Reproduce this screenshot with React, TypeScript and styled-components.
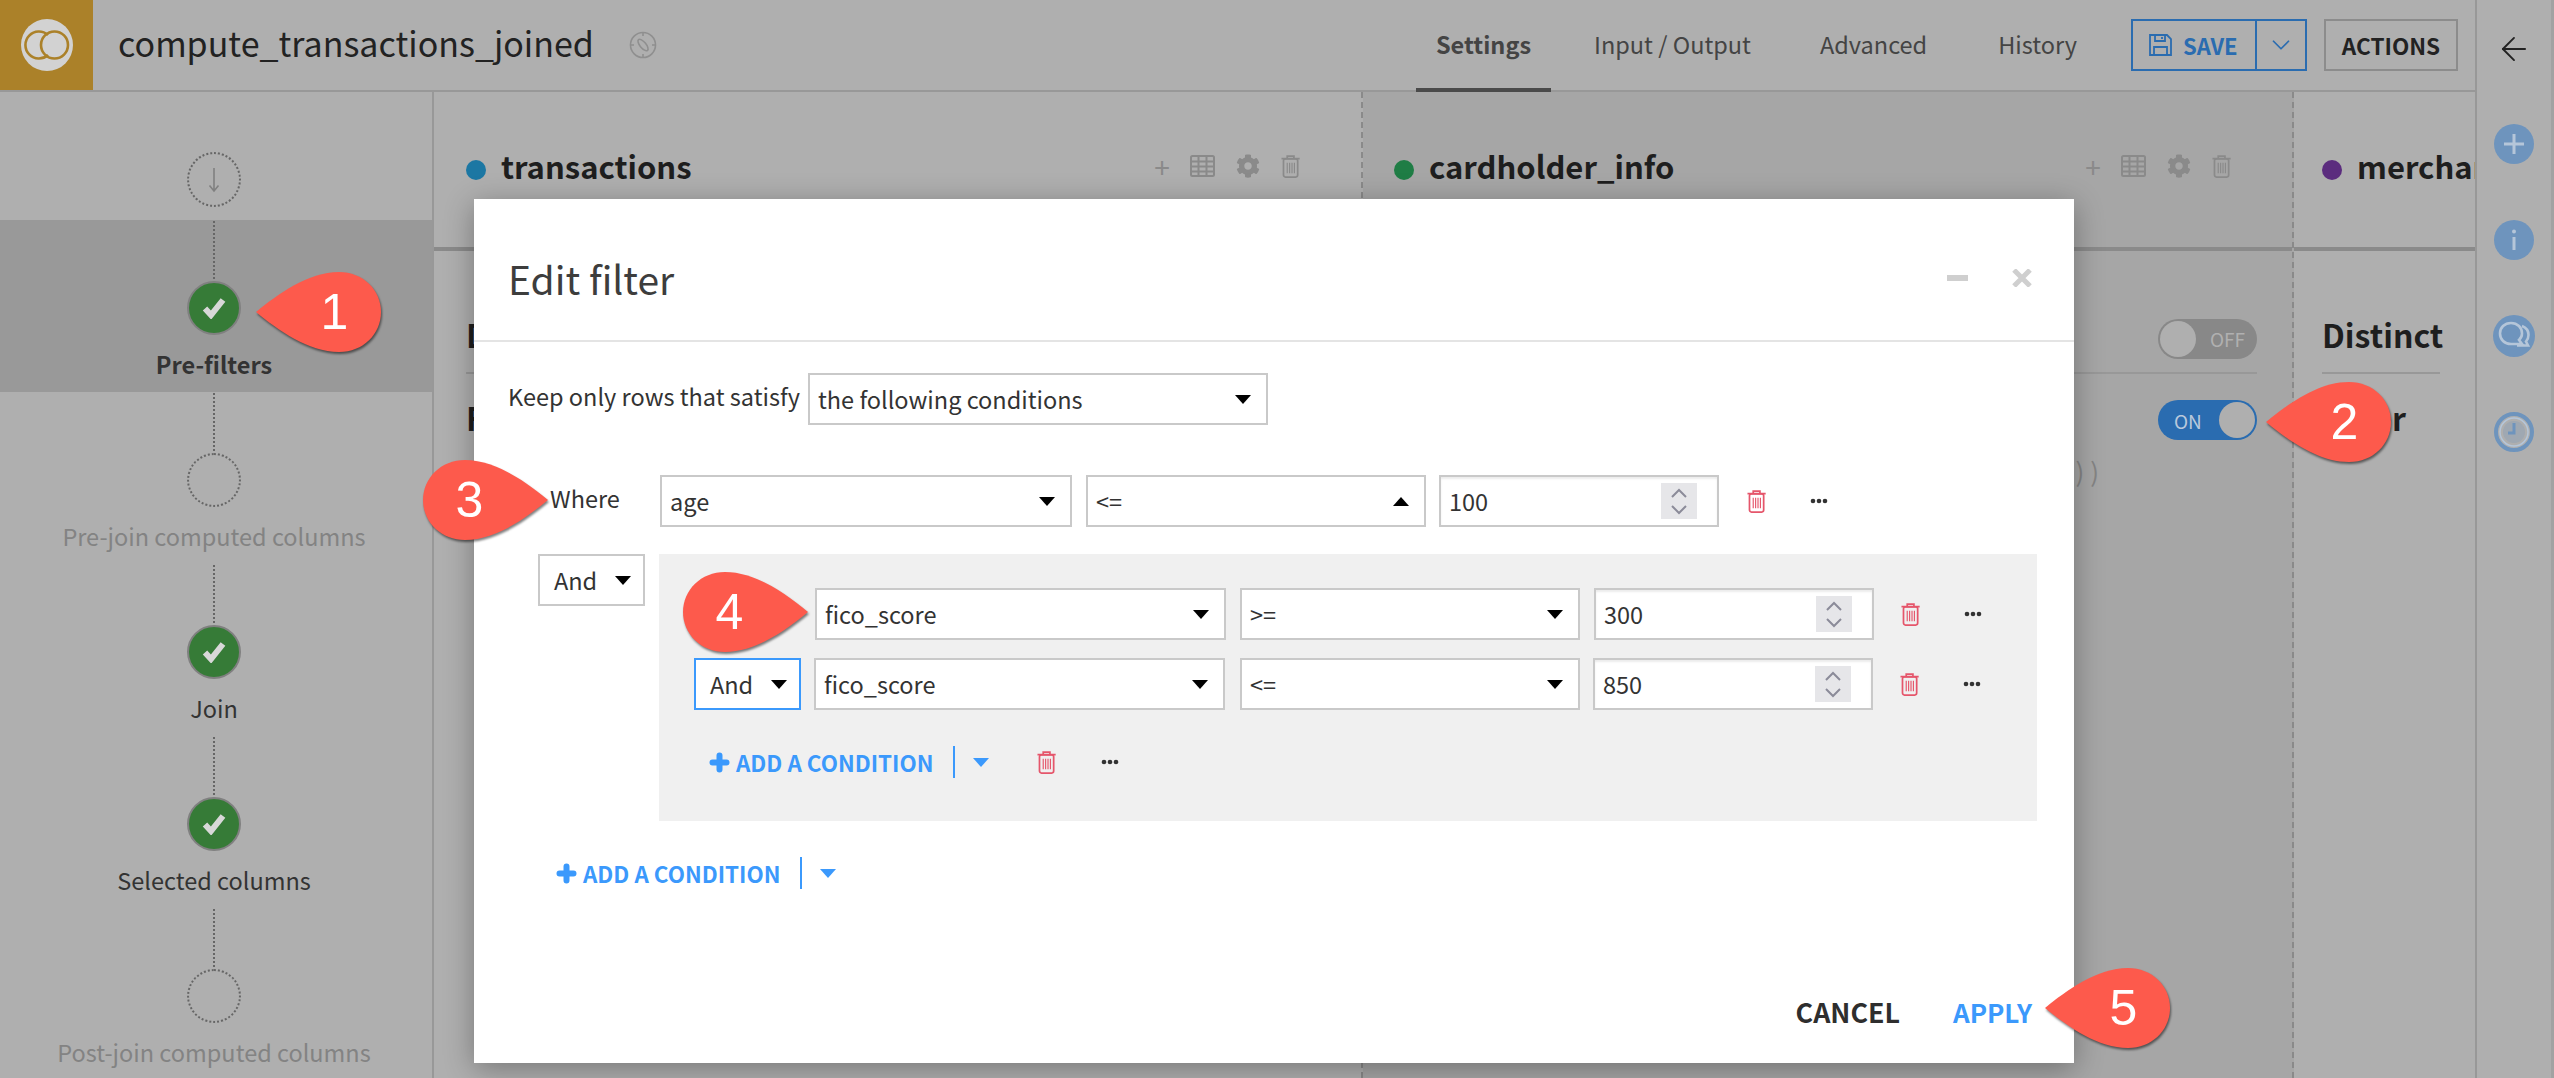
import styled, { createGlobalStyle } from "styled-components";
import { ArrowLeft, ChevronDown } from "lucide-react";
import { FaCog } from "react-icons/fa";

const GlobalStyle = createGlobalStyle`
  html, body {
    margin: 0;
    padding: 0;
    width: 2554px;
    height: 1078px;
    overflow: hidden;
    background: #afafaf;
  }
  * { box-sizing: border-box; }
  body {
    font-family: "Noto Sans CJK SC", "Source Sans Pro", "Liberation Sans", sans-serif;
    font-size: 23.5px;
    color: #333;
  }
`;

const Page = styled.div`
  position: relative;
  display: flex;
  width: 2554px;
  height: 1078px;
  overflow: hidden;
`;

const Workspace = styled.div`
  display: flex;
  flex-direction: column;
  width: 2475px;
`;

const Header = styled.header`
  display: flex;
  align-items: center;
  flex: none;
  height: 92px;
  padding-right: 17px;
  border-bottom: 2px solid #989898;
`;

const LogoBlock = styled.div`
  display: flex;
  align-items: center;
  justify-content: center;
  width: 93px;
  height: 90px;
  background: #ab8129;
`;

const Title = styled.h1`
  margin: 0 35px 4px 25px;
  font-size: 34px;
  font-weight: 400;
  line-height: 44px;
  color: #222;
`;

const Tabs = styled.nav`
  display: flex;
  align-self: stretch;
  margin-left: auto;
  margin-right: 34px;
`;

const Tab = styled.div<{ $active?: boolean; $gap?: number }>`
  display: flex;
  align-items: center;
  height: 92px;
  margin-left: ${(p) => p.$gap ?? 0}px;
  padding: 0 20px;
  font-weight: ${(p) => (p.$active ? 700 : 400)};
  color: #444;
  border-bottom: 4px solid ${(p) => (p.$active ? "#4a4a4a" : "transparent")};
`;

const SaveGroup = styled.div`
  display: flex;
  width: 176px;
  height: 52px;
  border: 2px solid #2a6cb0;
  color: #2a6cb0;
`;

const SaveButton = styled.div`
  display: flex;
  align-items: center;
  gap: 11px;
  width: 124px;
  padding-left: 16px;
  font-size: 22px;
  font-weight: 700;
  border-right: 2px solid #2a6cb0;
`;

const SaveCaret = styled.div`
  display: flex;
  flex: 1;
  align-items: center;
  justify-content: center;
`;

const ActionsButton = styled.div`
  display: flex;
  align-items: center;
  justify-content: center;
  width: 134px;
  height: 52px;
  margin-left: 17px;
  border: 2px solid #8c8c8c;
  font-size: 22.5px;
  font-weight: 700;
  color: #222;
`;

const Body = styled.div`
  display: flex;
  flex: 1;
  min-height: 0;
`;

const Sidebar = styled.aside`
  flex: none;
  width: 434px;
  padding-top: 60px;
  border-right: 2px solid #989898;
`;

const StartCircle = styled.div`
  display: flex;
  align-items: center;
  justify-content: center;
  width: 54px;
  height: 55px;
  margin: 0 auto 13px 187px;
  border: 2px dotted #666;
  border-radius: 50%;
  color: #808080;
`;

const Step = styled.div<{ $active?: boolean }>`
  display: flex;
  flex-direction: column;
  align-items: center;
  height: 172px;
  padding: 1px 4px 0 0;
  background: ${(p) => (p.$active ? "#999" : "transparent")};
`;

const StepLine = styled.div`
  width: 0;
  height: 58px;
  margin-bottom: 2px;
  border-left: 2px dotted #666;
`;

const StepCircle = styled.div<{ $done?: boolean }>`
  display: flex;
  flex: none;
  align-items: center;
  justify-content: center;
  width: 54px;
  height: 54px;
  border-radius: 50%;
  border: 2px ${(p) => (p.$done ? "solid #808080" : "dotted #666")};
  background: ${(p) => (p.$done ? "#367b37" : "transparent")};
`;

const StepLabel = styled.div<{ $tone?: "active" | "muted" }>`
  margin-top: 12px;
  line-height: 34px;
  white-space: nowrap;
  font-weight: ${(p) => (p.$tone === "active" ? 700 : 400)};
  color: ${(p) => (p.$tone === "muted" ? "#838383" : "#333")};
`;

const Columns = styled.div`
  display: flex;
  flex: 1;
  min-width: 0;
`;

const Column = styled.section<{ $width: number; $dark?: boolean; $pad: number; $last?: boolean }>`
  flex: none;
  width: ${(p) => p.$width}px;
  overflow: hidden;
  background: ${(p) => (p.$dark ? "#a6a6a6" : "transparent")};
  border-right: ${(p) => (p.$last ? "none" : "2px dashed #8a8a8a")};
  --pad: ${(p) => p.$pad}px;
`;

const ColumnHead = styled.div`
  display: flex;
  align-items: center;
  height: 159px;
  padding: 0 61px 7px var(--pad);
  border-bottom: 4px solid #8a8a8a;
`;

const Dot = styled.span<{ $color: string }>`
  flex: none;
  width: 20px;
  height: 20px;
  margin: 8px 15px 0 0;
  border-radius: 50%;
  background: ${(p) => p.$color};
`;

const ColumnName = styled.h2`
  margin: 0;
  font-size: 31px;
  font-weight: 700;
  line-height: 44px;
  white-space: nowrap;
  color: #1e1e1e;
`;

const ColumnTools = styled.div`
  display: flex;
  align-items: center;
  gap: 21px;
  margin-left: auto;
  color: #8a8a8a;
`;

const ToolPlus = styled.span`
  margin-right: -1px;
  font-size: 28px;
  line-height: 24px;
`;

const OptionRow = styled.div<{ $tall?: boolean }>`
  display: flex;
  align-items: center;
  justify-content: space-between;
  height: ${(p) => (p.$tall ? 123 : 92)}px;
  margin: 0 35px 0 var(--pad);
  padding-top: ${(p) => (p.$tall ? 54 : 0)}px;
  border-bottom: ${(p) => (p.$tall ? "2px solid #989898" : "none")};
`;

const OptionName = styled.div<{ $lift: number }>`
  margin-bottom: ${(p) => p.$lift}px;
  font-size: 32px;
  font-weight: 700;
  line-height: 40px;
  color: #1e1e1e;
`;

const FilterExpression = styled.div`
  display: flex;
  justify-content: flex-end;
  margin: -10px 193px 0 0;
  font-size: 26px;
  line-height: 30px;
  white-space: nowrap;
  color: #848484;
`;

const Toggle = styled.div<{ $on?: boolean }>`
  display: flex;
  align-items: center;
  justify-content: space-between;
  width: 99px;
  height: 40px;
  padding: ${(p) => (p.$on ? "0 2px 0 16px" : "0 12px 0 2px")};
  border-radius: 20px;
  background: ${(p) => (p.$on ? "#2a6cb0" : "#888")};
  font-size: 19px;
  color: ${(p) => (p.$on ? "#b9c9dc" : "#b0b0b0")};
`;

const Knob = styled.span`
  width: 36px;
  height: 36px;
  border-radius: 50%;
  background: #afafaf;
`;

const Rail = styled.aside`
  display: flex;
  flex: none;
  flex-direction: column;
  align-items: center;
  width: 79px;
  padding: 30px 0 0;
  border-left: 2px solid #989898;
  border-right: 3px solid #a2a2a2;
  color: #222;
`;

const RailButton = styled.div<{ $mt: number }>`
  display: flex;
  align-items: center;
  justify-content: center;
  width: 42px;
  height: 42px;
  margin-top: ${(p) => p.$mt}px;
`;

/* The dialog lies over the page */
const Modal = styled.div`
  position: absolute;
  left: 474px;
  top: 199px;
  display: flex;
  flex-direction: column;
  width: 1600px;
  height: 864px;
  background: #fff;
  box-shadow: 0 6px 28px rgba(0, 0, 0, 0.32);
`;

const ModalHead = styled.div`
  display: flex;
  align-items: center;
  flex: none;
  height: 143px;
  padding: 16px 42px 0 34px;
  border-bottom: 2px solid #e4e4e4;
`;

const ModalTitle = styled.h3`
  margin: 0;
  font-size: 39px;
  font-weight: 400;
  line-height: 56px;
  color: #3d3d3d;
`;

const ModalTools = styled.div`
  display: flex;
  align-items: center;
  gap: 44px;
  margin-left: auto;
`;

const ModalBody = styled.div`
  display: flex;
  flex: 1;
  flex-direction: column;
`;

const KeepRow = styled.div`
  display: flex;
  align-items: center;
  margin-top: 31px;
  padding-left: 34px;
`;

const FieldLabel = styled.div<{ $width: number }>`
  flex: none;
  width: ${(p) => p.$width}px;
  margin-bottom: 6px;
  white-space: nowrap;
  color: #333;
`;

const WhereRow = styled.div`
  display: flex;
  align-items: center;
  margin-top: 50px;
  padding-left: 76px;
`;

const GroupRow = styled.div`
  display: flex;
  align-items: flex-start;
  gap: 14px;
  margin-top: 27px;
  padding-left: 64px;
`;

const GroupBox = styled.div`
  width: 1378px;
  height: 267px;
  padding: 34px 0 0 35px;
  background: #f0f0f0;
`;

const ConditionRow = styled.div<{ $mt?: number }>`
  display: flex;
  align-items: center;
  margin-top: ${(p) => p.$mt ?? 0}px;
`;

const LeadSpacer = styled.div<{ $width: number }>`
  flex: none;
  width: ${(p) => p.$width}px;
`;

const Select = styled.div<{ $width: number; $focus?: boolean; $ml?: number; $pad?: number }>`
  display: flex;
  flex: none;
  align-items: center;
  justify-content: space-between;
  width: ${(p) => p.$width}px;
  height: 52px;
  margin-left: ${(p) => p.$ml ?? 0}px;
  padding: 0 ${(p) => (p.$pad ? 12 : 15)}px 0 ${(p) => p.$pad ?? 8}px;
  border: 2px solid ${(p) => (p.$focus ? "#3b99fc" : "#c9c9c9")};
  background: #fff;
  color: #333;
`;

const Caret = styled.span<{ $up?: boolean; $blue?: boolean }>`
  flex: none;
  width: 0;
  height: 0;
  border-left: 8px solid transparent;
  border-right: 8px solid transparent;
  ${(p) =>
    p.$up
      ? `border-bottom: 9px solid #000;`
      : `border-top: 9px solid ${p.$blue ? "#3b99fc" : "#000"};`}
`;

const NumberField = styled.div<{ $ml?: number }>`
  display: flex;
  flex: none;
  align-items: center;
  justify-content: space-between;
  width: 280px;
  height: 52px;
  margin-left: ${(p) => p.$ml ?? 13}px;
  padding: 0 20px 0 8px;
  border: 2px solid #c9c9c9;
  background: #fff;
  box-shadow: inset 0 2px 2px rgba(0, 0, 0, 0.08);
  color: #333;
`;

const Spinner = styled.div`
  display: flex;
  flex-direction: column;
  align-items: center;
  justify-content: center;
  gap: 7px;
  width: 36px;
  height: 36px;
  background: #e6e6e9;
`;

const RowTools = styled.div<{ $ml: number }>`
  display: flex;
  align-items: center;
  gap: 44px;
  margin-left: ${(p) => p.$ml}px;
`;

const AddRow = styled.div<{ $mt: number; $pl?: number }>`
  display: flex;
  align-items: center;
  height: 32px;
  margin-top: ${(p) => p.$mt}px;
  padding-left: ${(p) => p.$pl ?? 0}px;
  color: #3b99fc;
`;

const AddLabel = styled.span`
  margin-left: 6px;
  font-size: 22.4px;
  font-weight: 700;
  white-space: nowrap;
`;

const AddDivider = styled.span`
  width: 2px;
  height: 32px;
  margin: 0 18px 0 20px;
  background: #3b99fc;
`;

const ModalFoot = styled.div`
  display: flex;
  justify-content: flex-end;
  gap: 53px;
  margin-top: auto;
  padding: 0 42px 31px 0;
`;

const FootButton = styled.span<{ $primary?: boolean }>`
  font-size: ${(p) => (p.$primary ? 26 : 26.8)}px;
  font-weight: 700;
  line-height: 40px;
  color: ${(p) => (p.$primary ? "#3b99fc" : "#2e2e2e")};
`;

/* Tutorial callouts sit on top of everything */
const Callout = styled.div<{ $x: number; $y: number }>`
  position: absolute;
  left: ${(p) => p.$x}px;
  top: ${(p) => p.$y}px;
  display: flex;
  align-items: center;
  justify-content: center;
  width: 125px;
  height: 80px;
  filter: drop-shadow(1px 2px 1px rgba(0, 0, 0, 0.5));
`;

const CalloutShape = styled.svg`
  position: absolute;
  inset: 0;
`;

const CalloutDigit = styled.span<{ $shift: number }>`
  position: relative;
  left: ${(p) => p.$shift}px;
  font-family: "Liberation Sans", Arial, sans-serif;
  font-size: 50px;
  line-height: 56px;
  color: #fff;
`;

const Trash = ({ color = "#e5566b", height = 23 }: { color?: string; height?: number }) => (
  <svg width={(height * 20) / 24} height={height} viewBox="0 0 20 24" fill="none" stroke={color} strokeWidth="1.8">
    <path d="M6.5 3.5V1.2h7v2.3M.5 3.8h19" />
    <rect x="2.6" y="4" width="14.8" height="19" rx="2" />
    <path d="M6.5 8v11M9 8v11M11.5 8v11M14 8v11" strokeWidth="1.2" />
  </svg>
);

const Dots = () => (
  <svg width="18" height="6" viewBox="0 0 18 6" fill="#333">
    <circle cx="3" cy="3" r="2.3" />
    <circle cx="9" cy="3" r="2.3" />
    <circle cx="15" cy="3" r="2.3" />
  </svg>
);

const Check = () => (
  <svg width="24" height="22" viewBox="0 0 24 22" fill="none" stroke="#d8d8d8" strokeWidth="6">
    <path d="M3 11.5l6 6.500L21 3" />
  </svg>
);

const Logo = () => (
  <svg width="52" height="52" viewBox="0 0 52 52">
    <circle cx="26" cy="26" r="26" fill="#d2d2d2" />
    <g fill="none" stroke="#ab8129" strokeWidth="2.6">
      <path d="M27 16A13.500 13.500 0 1 0 27 36" />
      <circle cx="33.500" cy="26" r="13.500" />
    </g>
  </svg>
);

const Compass = () => (
  <svg width="28" height="28" viewBox="0 0 28 28" fill="none" stroke="#8f8f8f" strokeWidth="1.6">
    <circle cx="14" cy="14" r="12.5" />
    <path d="M14 1v4M14 23v4M1 14h4M23 14h4" />
    <ellipse cx="14" cy="14" rx="3" ry="7" transform="rotate(-40 14 14)" />
  </svg>
);

const Floppy = () => (
  <svg width="23" height="22" viewBox="0 0 23 22" fill="none" stroke="#2a6cb0" strokeWidth="1.8">
    <path d="M1 1h17l4 4v16H1z" />
    <path d="M6 1v6h10V1M13 3v2M5 21v-8h13v8" />
  </svg>
);

const GridIcon = () => (
  <svg width="25" height="22" viewBox="0 0 25 22" fill="none" stroke="#8a8a8a" strokeWidth="2">
    <rect x="1" y="1" width="23" height="20" rx="1.5" />
    <path d="M1 6.5h23M1 11.5h23M1 16.5h23M8.5 1v20M16.5 1v20" />
  </svg>
);

const ToolTrash = () => <Trash color="#8a8a8a" height={23} />;

const CircleArrow = () => (
  <svg width="12" height="26" viewBox="0 0 12 26" fill="none" stroke="#808080" strokeWidth="1.6">
    <path d="M6 1v23M1.5 18.5L6 24l4.5-5.5" />
  </svg>
);

const AddPlus = () => (
  <svg width="21" height="21" viewBox="0 0 21 21" stroke="#3b99fc" strokeWidth="6" strokeLinecap="round">
    <path d="M10.500 3.500v14M3.500 10.500h14" />
  </svg>
);

const SpinUp = () => (
  <svg width="16" height="10" viewBox="0 0 16 10" fill="none" stroke="#8b8b99" strokeWidth="2">
    <path d="M1 9l7-7 7 7" />
  </svg>
);

const SpinDown = () => (
  <svg width="16" height="10" viewBox="0 0 16 10" fill="none" stroke="#8b8b99" strokeWidth="2">
    <path d="M1 1l7 7 7-7" />
  </svg>
);

const RailPlus = () => (
  <svg width="40" height="40" viewBox="0 0 40 40">
    <circle cx="20" cy="20" r="20" fill="#6e94bd" />
    <path d="M20 10v20M10 20h20" stroke="#b5c6d9" strokeWidth="3" />
  </svg>
);

const RailInfo = () => (
  <svg width="40" height="40" viewBox="0 0 40 40">
    <circle cx="20" cy="20" r="20" fill="#6e94bd" />
    <path d="M20 17v13" stroke="#b5c6d9" strokeWidth="3" />
    <circle cx="20" cy="11.5" r="2" fill="#b5c6d9" />
  </svg>
);

const RailChat = () => (
  <svg width="42" height="42" viewBox="0 0 42 42">
    <circle cx="21" cy="21" r="21" fill="#6e94bd" />
    <g fill="none" stroke="#b5c6d9" strokeWidth="2.6">
      <path d="M18 8c-6.500 0-11 4.500-11 10.500 0 6 4.500 10.500 11 10.500h11l-3-4c2-1.800 3-4 3-6.500C29 12.500 24.500 8 18 8z" />
      <path d="M29 11c4 1.500 6.500 5 6.500 9 0 2.500-1 4.800-2.500 6.500l2 4H24" />
    </g>
  </svg>
);

const RailClock = () => (
  <svg width="40" height="40" viewBox="0 0 40 40" fill="none">
    <circle cx="20" cy="20" r="18" stroke="#6e94bd" strokeWidth="4" />
    <circle cx="20" cy="20" r="14" stroke="#b5c6d9" strokeWidth="1.500" />
    <circle cx="20" cy="20" r="11" fill="#6e94bd" fillOpacity="0.25" />
    <path d="M20 11v10h-6" stroke="#6e94bd" strokeWidth="3" />
  </svg>
);

const LEFT_PIN = "M0 40C22 22 52 0 83 0c24 0 42 18 42 40s-18 40-42 40C52 80 22 58 0 40z";
const RIGHT_PIN = "M125 40C103 22 73 0 42 0 18 0 0 18 0 40s18 40 42 40c31 0 61-22 83-40z";

type calloutProps = {
  n: number;
  x: number;
  y: number;
  right?: boolean;
};

const Badge = ({ n, x, y, right }: calloutProps) => (
  <Callout $x={x} $y={y}>
    <CalloutShape width="125" height="80" viewBox="0 0 125 80">
      <path d={right ? RIGHT_PIN : LEFT_PIN} fill="#fd5a4c" />
    </CalloutShape>
    <CalloutDigit $shift={right ? -16 : 16}>{n}</CalloutDigit>
  </Callout>
);

const Tools = () => (
  <ColumnTools>
    <ToolPlus>+</ToolPlus>
    <GridIcon />
    <FaCog size={24} />
    <ToolTrash />
  </ColumnTools>
);

type conditionProps = {
  column: string;
  op: string;
  value: string;
};

const ConditionFields = ({ column, op, value, first }: conditionProps & { first?: boolean }) => (
  <>
    <Select $width={411}>
      {column}
      <Caret />
    </Select>
    <Select $width={340} $ml={first ? 14 : 15}>
      {op}
      <Caret />
    </Select>
    <NumberField $ml={first ? 14 : 13}>
      {value}
      <Spinner>
        <SpinUp />
        <SpinDown />
      </Spinner>
    </NumberField>
    <RowTools $ml={27}>
      <Trash />
      <Dots />
    </RowTools>
  </>
);

const steps = [
  { label: "Pre-filters", done: true, active: true },
  { label: "Pre-join computed columns", done: false },
  { label: "Join", done: true },
  { label: "Selected columns", done: true },
  { label: "Post-join computed columns", done: false },
];

export default function App() {
  return (
    <Page>
      <GlobalStyle />
      <Workspace>
        <Header>
          <LogoBlock>
            <Logo />
          </LogoBlock>
          <Title>compute_transactions_joined</Title>
          <Compass />
          <Tabs>
            <Tab $active>Settings</Tab>
            <Tab $gap={23}>Input / Output</Tab>
            <Tab $gap={29}>Advanced</Tab>
            <Tab $gap={31}>History</Tab>
          </Tabs>
          <SaveGroup>
            <SaveButton>
              <Floppy />
              SAVE
            </SaveButton>
            <SaveCaret>
              <ChevronDown size={30} strokeWidth={1.4} />
            </SaveCaret>
          </SaveGroup>
          <ActionsButton>ACTIONS</ActionsButton>
        </Header>
        <Body>
          <Sidebar>
            <StartCircle>
              <CircleArrow />
            </StartCircle>
            {steps.map((s) => (
              <Step key={s.label} $active={s.active}>
                <StepLine />
                <StepCircle $done={s.done}>{s.done && <Check />}</StepCircle>
                <StepLabel $tone={s.active ? "active" : s.done ? undefined : "muted"}>{s.label}</StepLabel>
              </Step>
            ))}
          </Sidebar>
          <Columns>
            <Column $width={929} $pad={32}>
              <ColumnHead>
                <Dot $color="#1c77a3" />
                <ColumnName>transactions</ColumnName>
                <Tools />
              </ColumnHead>
              <OptionRow $tall>
                <OptionName $lift={10}>Distinct</OptionName>
              </OptionRow>
              <OptionRow>
                <OptionName $lift={6}>Filter</OptionName>
              </OptionRow>
            </Column>
            <Column $width={931} $pad={31} $dark>
              <ColumnHead>
                <Dot $color="#1f7d45" />
                <ColumnName>cardholder_info</ColumnName>
                <Tools />
              </ColumnHead>
              <OptionRow $tall>
                <OptionName $lift={10}>Distinct</OptionName>
                <Toggle>
                  <Knob />
                  OFF
                </Toggle>
              </OptionRow>
              <OptionRow>
                <OptionName $lift={6}>Filter</OptionName>
                <Toggle $on>
                  ON
                  <Knob />
                </Toggle>
              </OptionRow>
              <FilterExpression>( fico_score &gt;= 300 ) )</FilterExpression>
            </Column>
            <Column $width={181} $pad={28} $last>
              <ColumnHead>
                <Dot $color="#5b2c7e" />
                <ColumnName>merchants_info</ColumnName>
              </ColumnHead>
              <OptionRow $tall>
                <OptionName $lift={10}>Distinct</OptionName>
              </OptionRow>
              <OptionRow>
                <OptionName $lift={6}>Filter</OptionName>
              </OptionRow>
            </Column>
          </Columns>
        </Body>
      </Workspace>
      <Rail>
        <ArrowLeft size={38} strokeWidth={1.2} />
        <RailButton $mt={55}>
          <RailPlus />
        </RailButton>
        <RailButton $mt={54}>
          <RailInfo />
        </RailButton>
        <RailButton $mt={54}>
          <RailChat />
        </RailButton>
        <RailButton $mt={54}>
          <RailClock />
        </RailButton>
      </Rail>

      <Modal>
        <ModalHead>
          <ModalTitle>Edit filter</ModalTitle>
          <ModalTools>
            <svg width="21" height="6" viewBox="0 0 21 6">
              <rect width="21" height="6" fill="#cfcfcf" />
            </svg>
            <svg width="20" height="18" viewBox="0 0 20 18" stroke="#cfcfcf" strokeWidth="5">
              <path d="M2 1l16 16M18 1L2 17" />
            </svg>
          </ModalTools>
        </ModalHead>
        <ModalBody>
          <KeepRow>
            <FieldLabel $width={300}>Keep only rows that satisfy</FieldLabel>
            <Select $width={460}>
              the following conditions
              <Caret />
            </Select>
          </KeepRow>
          <WhereRow>
            <FieldLabel $width={110}>Where</FieldLabel>
            <Select $width={412}>
              age
              <Caret />
            </Select>
            <Select $width={340} $ml={14}>
              &lt;=
              <Caret $up />
            </Select>
            <NumberField>
              100
              <Spinner>
                <SpinUp />
                <SpinDown />
              </Spinner>
            </NumberField>
            <RowTools $ml={28}>
              <Trash />
              <Dots />
            </RowTools>
          </WhereRow>
          <GroupRow>
            <Select $width={107} $pad={14}>
              And
              <Caret />
            </Select>
            <GroupBox>
              <ConditionRow>
                <LeadSpacer $width={121} />
                <ConditionFields column="fico_score" op=">=" value="300" first />
              </ConditionRow>
              <ConditionRow $mt={18}>
                <Select $width={107} $focus $pad={14}>
                  And
                  <Caret />
                </Select>
                <LeadSpacer $width={13} />
                <ConditionFields column="fico_score" op="<=" value="850" />
              </ConditionRow>
              <AddRow $mt={36} $pl={15}>
                <AddPlus />
                <AddLabel>ADD A CONDITION</AddLabel>
                <AddDivider />
                <Caret $blue />
                <RowTools $ml={48}>
                  <Trash />
                  <Dots />
                </RowTools>
              </AddRow>
            </GroupBox>
          </GroupRow>
          <AddRow $mt={36} $pl={82}>
            <AddPlus />
            <AddLabel>ADD A CONDITION</AddLabel>
            <AddDivider />
            <Caret $blue />
          </AddRow>
          <ModalFoot>
            <FootButton>CANCEL</FootButton>
            <FootButton $primary>APPLY</FootButton>
          </ModalFoot>
        </ModalBody>
      </Modal>

      <Badge n={1} x={256} y={272} />
      <Badge n={2} x={2266} y={382} />
      <Badge n={3} x={423} y={460} right />
      <Badge n={4} x={683} y={572} right />
      <Badge n={5} x={2045} y={968} />
    </Page>
  );
}
